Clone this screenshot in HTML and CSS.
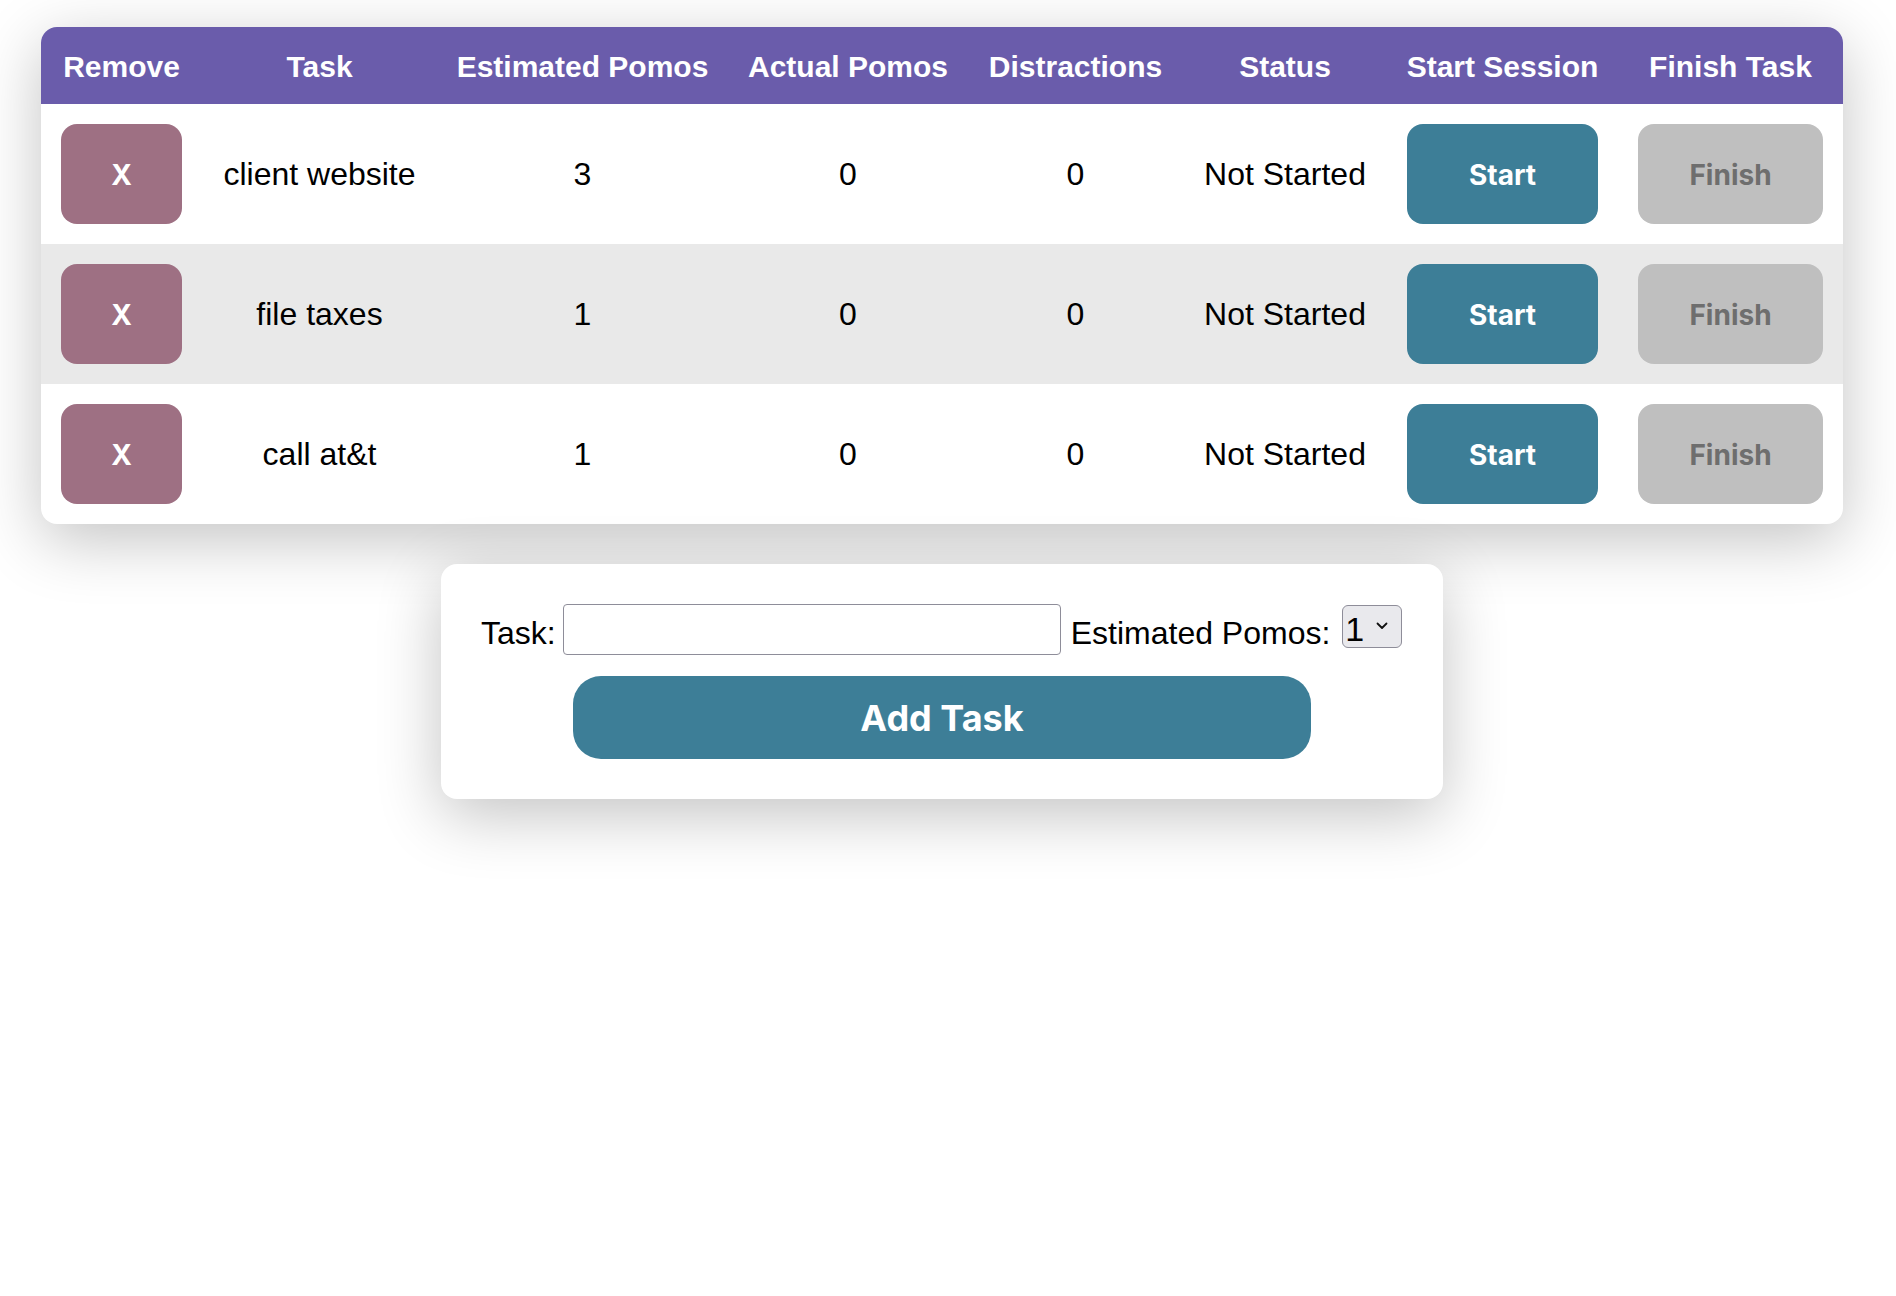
FILE: index.html
```html
<!DOCTYPE html>
<html lang="en">
<head>
<meta charset="utf-8">
<title>Pomodoro Tasks</title>
<link rel="stylesheet" href="styles.css">
</head>
<body>
<main class="page">
  <div class="table-card">
    <table class="tasks">
      <colgroup>
        <col class="col-remove">
        <col class="col-task">
        <col class="col-est">
        <col class="col-actual">
        <col class="col-distr">
        <col class="col-status">
        <col class="col-start">
        <col class="col-finish">
      </colgroup>
      <thead>
        <tr class="head-row">
          <th>Remove</th>
          <th>Task</th>
          <th>Estimated Pomos</th>
          <th>Actual Pomos</th>
          <th>Distractions</th>
          <th>Status</th>
          <th>Start Session</th>
          <th>Finish Task</th>
        </tr>
      </thead>
      <tbody>
        <tr>
          <td><button class="btn btn-remove">X</button></td>
          <td>client website</td>
          <td>3</td>
          <td>0</td>
          <td>0</td>
          <td>Not Started</td>
          <td><button class="btn btn-start">Start</button></td>
          <td><button class="btn btn-finish">Finish</button></td>
        </tr>
        <tr>
          <td><button class="btn btn-remove">X</button></td>
          <td>file taxes</td>
          <td>1</td>
          <td>0</td>
          <td>0</td>
          <td>Not Started</td>
          <td><button class="btn btn-start">Start</button></td>
          <td><button class="btn btn-finish">Finish</button></td>
        </tr>
        <tr>
          <td><button class="btn btn-remove">X</button></td>
          <td>call at&amp;t</td>
          <td>1</td>
          <td>0</td>
          <td>0</td>
          <td>Not Started</td>
          <td><button class="btn btn-start">Start</button></td>
          <td><button class="btn btn-finish">Finish</button></td>
        </tr>
      </tbody>
    </table>
  </div>

  <form class="add-form">
    <div class="form-row">
      <label class="field-label label-task" for="task">Task:</label>
      <input class="task-input" id="task" type="text">
      <label class="field-label label-est" for="est">Estimated Pomos:</label>
      <div class="select-wrap">
        <select class="est-select" id="est">
          <option>1</option>
          <option>2</option>
          <option>3</option>
          <option>4</option>
        </select>
        <svg class="chev" width="12" height="8" viewBox="0 0 12 8"><path d="M1.5 1.5 L6 6 L10.5 1.5" fill="none" stroke="#111" stroke-width="1.8" stroke-linecap="round" stroke-linejoin="round"/></svg>
      </div>
    </div>
    <button type="button" class="add-btn">Add Task</button>
  </form>
</main>
</body>
</html>
```

FILE: styles.css
```css
html, body {
  margin: 0;
  padding: 0;
  background: #ffffff;
}

body {
  font-family: "Liberation Sans", Arial, Helvetica, sans-serif;
  color: #000;
}

.page {
  padding: 27px 12px 300px 0;
}

.table-card {
  width: 1802px;
  margin: 0 auto;
  background: #ffffff;
  border-radius: 16px;
  overflow: hidden;
  box-shadow: 0 16px 64px rgba(0, 0, 0, 0.24);
}

.tasks {
  width: 100%;
  border-collapse: collapse;
  table-layout: fixed;
}

.col-remove { width: 161px; }
.col-task { width: 235px; }
.col-est { width: 291px; }
.col-actual { width: 240px; }
.col-distr { width: 215px; }
.col-status { width: 204px; }
.col-start { width: 231px; }
.col-finish { width: 225px; }

.head-row {
  background: #6a5cab;
}

.tasks th {
  box-sizing: border-box;
  height: 77px;
  padding: 2px 8px 0;
  color: #ffffff;
  font-size: 30px;
  font-weight: 700;
  text-align: center;
  vertical-align: middle;
  white-space: nowrap;
}

.tasks td {
  padding: 20px;
  font-size: 32px;
  text-align: center;
  vertical-align: middle;
  white-space: nowrap;
}

.tasks tbody tr:nth-child(even) {
  background: #e9e9e9;
}

.btn {
  display: block;
  width: 100%;
  height: 100px;
  border: none;
  border-radius: 16px;
  padding: 2px 0 0;
  font-family: Inter, "Noto Sans", sans-serif;
  font-weight: 700;
  font-size: 28px;
  cursor: pointer;
}

.btn-remove {
  background: #9e7083;
  color: #ffffff;
}

.btn-start {
  background: #3d7e97;
  color: #ffffff;
}

.btn-finish {
  background: #bfbfbf;
  color: #6e6e6e;
}

.add-form {
  width: 922px;
  margin: 40px auto 0;
  padding: 40px;
  background: #ffffff;
  border-radius: 16px;
  box-shadow: 0 16px 64px rgba(0, 0, 0, 0.24);
}

.form-row {
  display: flex;
  align-items: flex-start;
}

.field-label {
  font-size: 32px;
  line-height: 37px;
  margin-top: 11px;
  white-space: nowrap;
}

.label-task {
  margin-right: 7px;
}

.label-est {
  margin-left: 10px;
  margin-right: 12px;
}

.task-input {
  box-sizing: border-box;
  width: 498px;
  height: 51px;
  margin: 0;
  border: 1.5px solid #8e8d99;
  border-radius: 4px;
  background: #fff;
  font-size: 28px;
  font-family: "Liberation Sans", Arial, sans-serif;
}

.select-wrap {
  position: relative;
  margin-top: 1px;
}

.est-select {
  appearance: none;
  -webkit-appearance: none;
  box-sizing: border-box;
  width: 60px;
  height: 43px;
  margin: 0;
  padding: 4px 0 0 2px;
  border: 1.5px solid #8e8d99;
  border-radius: 6px;
  background: #e9e9ed;
  color: #000;
  font-family: "Liberation Sans", Arial, sans-serif;
  font-size: 34px;
  line-height: 38px;
}

.chev {
  position: absolute;
  right: 14px;
  top: 17px;
  pointer-events: none;
}

.add-btn {
  display: block;
  width: 80%;
  height: 83px;
  margin: 21px auto 0;
  border: none;
  border-radius: 28px;
  background: #3d7e97;
  color: #ffffff;
  font-family: Inter, "Noto Sans", sans-serif;
  font-weight: 700;
  font-size: 36px;
  cursor: pointer;
}
```
